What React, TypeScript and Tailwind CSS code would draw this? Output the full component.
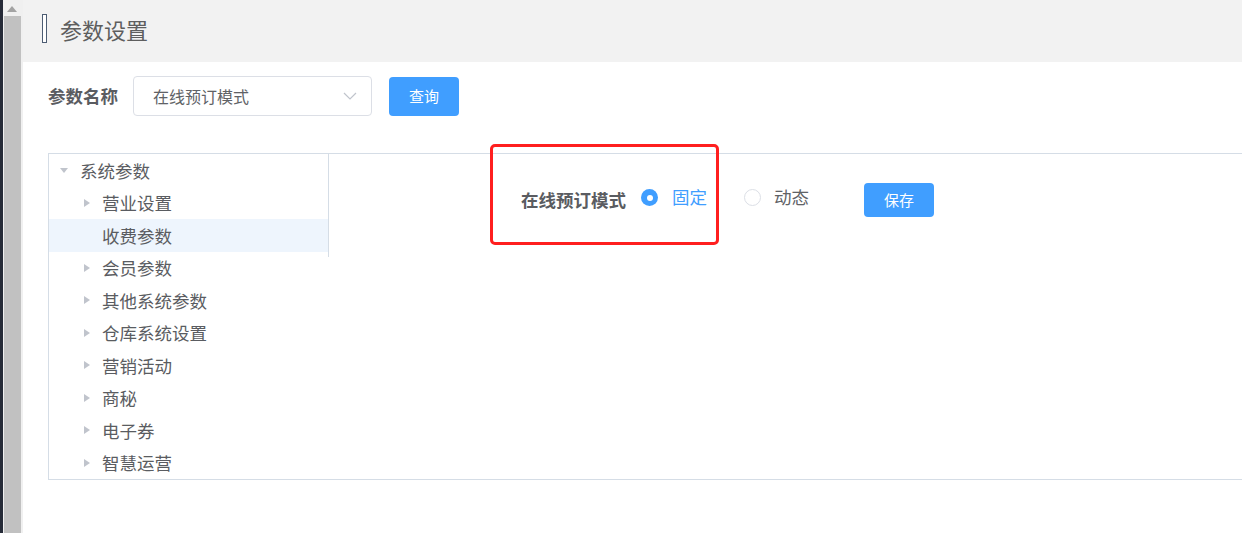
import React from "react";

const font = { fontFamily: '"Noto Sans CJK SC", "Microsoft YaHei", sans-serif' };

type Node = { label: string; level: number; kind: "open" | "closed" | "leaf"; selected?: boolean };

const nodes: Node[] = [
  { label: "系统参数", level: 0, kind: "open" },
  { label: "营业设置", level: 1, kind: "closed" },
  { label: "收费参数", level: 1, kind: "leaf", selected: true },
  { label: "会员参数", level: 1, kind: "closed" },
  { label: "其他系统参数", level: 1, kind: "closed" },
  { label: "仓库系统设置", level: 1, kind: "closed" },
  { label: "营销活动", level: 1, kind: "closed" },
  { label: "商秘", level: 1, kind: "closed" },
  { label: "电子券", level: 1, kind: "closed" },
  { label: "智慧运营", level: 1, kind: "closed" },
];

function TreeRow({ n }: { n: Node }) {
  return (
    <div className={`flex h-[32.5px] items-center ${n.selected ? "bg-[#eef5fd]" : ""}`}>
      {n.level === 0 ? (
        <div className="flex w-[31px] shrink-0 justify-end pr-[12px]">
          <svg width="8" height="5" viewBox="0 0 8 5">
            <polygon points="0,0 8,0 4,5" fill="#c0c4cc" />
          </svg>
        </div>
      ) : (
        <div className="flex w-[53px] shrink-0 justify-end pr-[12px]">
          {n.kind === "closed" ? (
            <svg width="6" height="8" viewBox="0 0 6 8">
              <polygon points="0,0 6,4 0,8" fill="#c0c4cc" />
            </svg>
          ) : null}
        </div>
      )}
      <span className="text-[17.5px] leading-none text-[#5a5c61]">{n.label}</span>
    </div>
  );
}

export default function App() {
  return (
    <div className="relative flex h-[533px] w-[1242px] overflow-hidden bg-white" style={font}>
      {/* left dark edge + scrollbar */}
      <div className="w-[3px] shrink-0 bg-[#262b38]" />
      <div className="flex w-[20px] shrink-0 flex-col bg-[#f0f0f0]">
        <div className="flex h-[16px] items-center justify-center pr-[2px] pt-[1px]">
          <svg width="10" height="6" viewBox="0 0 10 6">
            <polygon points="0,6 10,6 5,0" fill="#a3a3a3" />
          </svg>
        </div>
        <div className="ml-[1px] w-[17px] flex-1 bg-[#c1c1c1]" />
      </div>

      {/* main */}
      <div className="flex min-w-0 flex-1 flex-col">
        <div className="flex h-[62px] shrink-0 items-center bg-[#f2f2f2] pb-[5px] pl-[19px]">
          <div className="h-[29px] w-[5px] border-[1.5px] border-[#4d5d73] bg-white" />
          <span className="ml-[13px] text-[22px] leading-none text-[#5e5e5e]">参数设置</span>
        </div>

        <div className="flex-1 bg-white pl-[25px]">
          {/* search row */}
          <div className="mt-[14px] flex items-center">
            <span className="text-[17.5px] font-bold text-[#5a5c61]">参数名称</span>
            <div className="ml-[15px] flex h-[40px] w-[239px] items-center justify-between rounded-[4px] border border-[#dcdfe6] pl-[19px] pr-[14px]">
              <span className="text-[16px] text-[#606266]">在线预订模式</span>
              <svg width="14" height="8" viewBox="0 0 14 8" fill="none">
                <polyline points="1,1 7,7 13,1" stroke="#c0c4cc" strokeWidth="1.2" />
              </svg>
            </div>
            <button className="ml-[17px] mt-[1px] flex h-[39px] w-[70px] items-center justify-center rounded-[4px] bg-[#409eff] text-[15px] text-white">
              查询
            </button>
          </div>

          {/* panel */}
          <div className="mt-[37px] flex h-[327px] w-[1210px] border border-[#d5dde6]">
            <div className="w-[279px] shrink-0">
              {nodes.map((n) => (
                <TreeRow key={n.label} n={n} />
              ))}
            </div>
            <div className="h-[103px] flex-1 border-l border-[#d5dde6] pl-[192px] pt-[29px]">
              <div className="flex h-[34px] items-center">
                <span className="w-[106px] text-[17.5px] font-bold text-[#5a5c61]">在线预订模式</span>
                <span className="ml-[14px] mt-[-5px] flex h-[17px] w-[17px] items-center justify-center rounded-full bg-[#409eff]">
                  <span className="h-[6px] w-[6px] rounded-full bg-white" />
                </span>
                <span className="ml-[14px] mt-[-5px] text-[17.5px] text-[#409eff]">固定</span>
                <span className="ml-[37px] mt-[-5px] h-[17px] w-[17px] rounded-full border border-[#dcdfe6] bg-white" />
                <span className="ml-[13px] mt-[-5px] text-[17.5px] text-[#606266]">动态</span>
                <button className="ml-[55px] flex h-[34px] w-[70px] items-center justify-center rounded-[4px] bg-[#409eff] text-[15px] text-white">
                  保存
                </button>
              </div>
            </div>
          </div>
        </div>
      </div>

      {/* red annotation box */}
      <div className="absolute left-[490px] top-[144px] h-[101px] w-[229px] rounded-[5px] border-[3px] border-[#ff1f1f]" />
    </div>
  );
}
